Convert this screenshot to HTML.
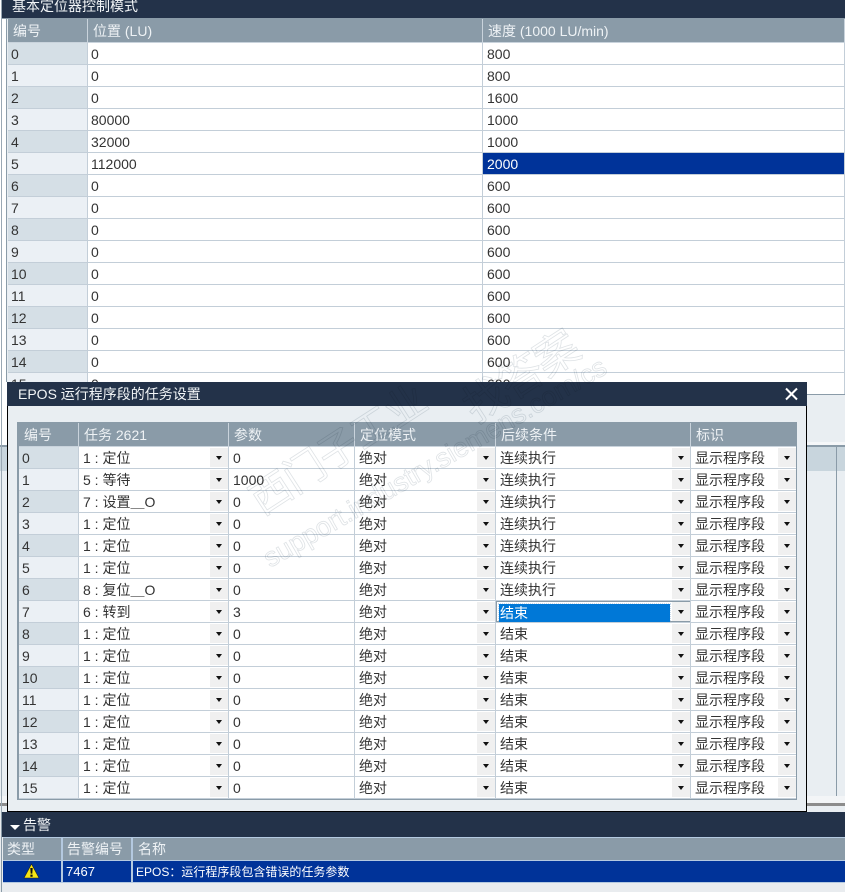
<!DOCTYPE html>
<html lang="zh"><head><meta charset="utf-8"><title>EPOS</title>
<style>
html,body{margin:0;padding:0}
body{position:relative;width:845px;height:892px;overflow:hidden;background:#e9eef2;font:14px/20px "Liberation Sans","WenQuanYi Zen Hei",sans-serif;color:#333}
.a{position:absolute}
table{border-collapse:separate;border-spacing:0;table-layout:fixed;background:#fff}
td{height:20px;padding:1px 0 0 4px;border-right:1px solid #c3ced8;border-bottom:1px solid #c3ced8;white-space:nowrap;overflow:hidden;position:relative;box-sizing:content-box}
tr.h td{background:#8a9ba8;color:#eef2f5;border-color:#c9d3dc;padding-left:5px}
td:first-child{padding-left:3px;background:#ebf0f5}
tr:nth-child(even) td:first-child{background:#d5dfe6}
tr.h td:first-child{background:#8a9ba8;padding-left:5px}
tr.h td{height:22px}
td.sel{background:#003399;color:#fff}
td.d i{position:absolute;right:0;top:1px;width:18px;height:19px;background:#f0f0f0}
td.d i:after{content:"";position:absolute;left:6px;top:8px;border:3px solid transparent;border-top:4px solid #111;border-bottom:0}
td.f b{position:absolute;left:3px;top:3px;width:171px;height:18px;background:#0078d7;color:#fff;font-weight:400;line-height:18px;padding-left:1px;box-sizing:border-box;outline:1px dotted #cde}
td.f{box-shadow:inset 0 0 0 1px #8a9ba8}
</style></head><body>
<div class="a" style="left:0;top:0;width:7px;height:445px;background:#fff"></div>
<div class="a" style="left:0;top:445px;width:7px;height:2px;background:#8a9ba8"></div>
<div class="a" style="left:0;top:447px;width:7px;height:24px;background:#c8d5dd"></div>
<div class="a" style="left:0;top:471px;width:7px;height:325px;background:#e9eef2"></div>
<div class="a" style="left:0;top:796px;width:7px;height:7px;background:#f3f5f7"></div>
<div class="a" style="left:0;top:803px;width:7px;height:3px;background:#8c8c8c"></div>
<div class="a" style="left:1px;top:0;width:1px;height:812px;background:#9aa8b4"></div>
<div class="a" style="left:6px;top:19px;width:1px;height:363px;background:#8a9ba8"></div>
<div class="a" style="left:2px;top:0;width:843px;height:18px;background:#233249;color:#f2f5f7;line-height:13px;padding-left:10px;box-sizing:border-box">基本定位器控制模式</div>
<div class="a" style="left:2px;top:18px;width:843px;height:1px;background:#8a9ba8"></div>

<table id="t" class="a" style="left:8px;top:19px;width:837px">
<colgroup><col style="width:80px"><col style="width:395px"><col style="width:362px"></colgroup>
<tr class="h"><td>编号</td><td>位置 (LU)</td><td>速度 (1000 LU/min)</td></tr>
<tr><td>0</td><td style="padding-left:3px">0</td><td>800</td></tr>
<tr><td>1</td><td style="padding-left:3px">0</td><td>800</td></tr>
<tr><td>2</td><td style="padding-left:3px">0</td><td>1600</td></tr>
<tr><td>3</td><td style="padding-left:3px">80000</td><td>1000</td></tr>
<tr><td>4</td><td style="padding-left:3px">32000</td><td>1000</td></tr>
<tr><td>5</td><td style="padding-left:3px">112000</td><td class="sel">2000</td></tr>
<tr><td>6</td><td style="padding-left:3px">0</td><td>600</td></tr>
<tr><td>7</td><td style="padding-left:3px">0</td><td>600</td></tr>
<tr><td>8</td><td style="padding-left:3px">0</td><td>600</td></tr>
<tr><td>9</td><td style="padding-left:3px">0</td><td>600</td></tr>
<tr><td>10</td><td style="padding-left:3px">0</td><td>600</td></tr>
<tr><td>11</td><td style="padding-left:3px">0</td><td>600</td></tr>
<tr><td>12</td><td style="padding-left:3px">0</td><td>600</td></tr>
<tr><td>13</td><td style="padding-left:3px">0</td><td>600</td></tr>
<tr><td>14</td><td style="padding-left:3px">0</td><td>600</td></tr>
<tr><td>15</td><td style="padding-left:3px">0</td><td>600</td></tr>
</table>

<!-- right-hand background panel -->
<div class="a" style="left:807px;top:394px;width:38px;height:1px;background:#8a9ba8"></div>
<div class="a" style="left:807px;top:395px;width:38px;height:417px;background:#e9eef2"></div>
<div class="a" style="left:807px;top:442px;width:38px;height:3px;background:#f5f7f9"></div>
<div class="a" style="left:807px;top:445px;width:38px;height:2px;background:#8a9ba8"></div>
<div class="a" style="left:807px;top:447px;width:38px;height:24px;background:#c8d5dd"></div>
<div class="a" style="left:836px;top:445px;width:1px;height:351px;background:#8a9ba8"></div>
<div class="a" style="left:807px;top:796px;width:38px;height:7px;background:#f3f5f7"></div>
<div class="a" style="left:807px;top:803px;width:38px;height:3px;background:#8c8c8c"></div>

<!-- dialog -->
<div class="a" style="left:7px;top:382px;width:800px;height:430px;background:#e9eef2;border:solid #000;border-width:0 1px 1px 1px;box-sizing:border-box"></div>
<div class="a" style="left:7px;top:382px;width:800px;height:24px;background:#233249;color:#f2f5f7;line-height:24px;padding-left:11px;box-sizing:border-box">EPOS 运行程序段的任务设置</div>
<svg class="a" style="left:784px;top:387px" width="15" height="14" viewBox="0 0 15 14"><path d="M2 1.5L13 12.5M13 1.5L2 12.5" stroke="#fff" stroke-width="2" fill="none"/></svg>
<div class="a" style="left:17px;top:422px;width:780px;height:378px;background:#fff;border:1px solid #8a9ba8;border-width:1px 1px 2px 2px;box-sizing:border-box"></div>

<table id="d" class="a" style="left:19px;top:423px;width:777px">
<colgroup><col style="width:60px"><col style="width:150px"><col style="width:126px"><col style="width:141px"><col style="width:195px"><col style="width:105px"></colgroup>
<tr class="h"><td>编号</td><td>任务 2621</td><td>参数</td><td>定位模式</td><td>后续条件</td><td style="border-right:0">标识</td></tr>
<tr><td>0</td><td class="d">1 : 定位<i></i></td><td>0</td><td class="d">绝对<i></i></td><td class="d">连续执行<i></i></td><td class="d" style="border-right:0">显示程序段<i></i></td></tr>
<tr><td>1</td><td class="d">5 : 等待<i></i></td><td>1000</td><td class="d">绝对<i></i></td><td class="d">连续执行<i></i></td><td class="d" style="border-right:0">显示程序段<i></i></td></tr>
<tr><td>2</td><td class="d">7 : 设置＿O<i></i></td><td>0</td><td class="d">绝对<i></i></td><td class="d">连续执行<i></i></td><td class="d" style="border-right:0">显示程序段<i></i></td></tr>
<tr><td>3</td><td class="d">1 : 定位<i></i></td><td>0</td><td class="d">绝对<i></i></td><td class="d">连续执行<i></i></td><td class="d" style="border-right:0">显示程序段<i></i></td></tr>
<tr><td>4</td><td class="d">1 : 定位<i></i></td><td>0</td><td class="d">绝对<i></i></td><td class="d">连续执行<i></i></td><td class="d" style="border-right:0">显示程序段<i></i></td></tr>
<tr><td>5</td><td class="d">1 : 定位<i></i></td><td>0</td><td class="d">绝对<i></i></td><td class="d">连续执行<i></i></td><td class="d" style="border-right:0">显示程序段<i></i></td></tr>
<tr><td>6</td><td class="d">8 : 复位＿O<i></i></td><td>0</td><td class="d">绝对<i></i></td><td class="d">连续执行<i></i></td><td class="d" style="border-right:0">显示程序段<i></i></td></tr>
<tr><td>7</td><td class="d">6 : 转到<i></i></td><td>3</td><td class="d">绝对<i></i></td><td class="d f"><b>结束</b><i></i></td><td class="d" style="border-right:0">显示程序段<i></i></td></tr>
<tr><td>8</td><td class="d">1 : 定位<i></i></td><td>0</td><td class="d">绝对<i></i></td><td class="d">结束<i></i></td><td class="d" style="border-right:0">显示程序段<i></i></td></tr>
<tr><td>9</td><td class="d">1 : 定位<i></i></td><td>0</td><td class="d">绝对<i></i></td><td class="d">结束<i></i></td><td class="d" style="border-right:0">显示程序段<i></i></td></tr>
<tr><td>10</td><td class="d">1 : 定位<i></i></td><td>0</td><td class="d">绝对<i></i></td><td class="d">结束<i></i></td><td class="d" style="border-right:0">显示程序段<i></i></td></tr>
<tr><td>11</td><td class="d">1 : 定位<i></i></td><td>0</td><td class="d">绝对<i></i></td><td class="d">结束<i></i></td><td class="d" style="border-right:0">显示程序段<i></i></td></tr>
<tr><td>12</td><td class="d">1 : 定位<i></i></td><td>0</td><td class="d">绝对<i></i></td><td class="d">结束<i></i></td><td class="d" style="border-right:0">显示程序段<i></i></td></tr>
<tr><td>13</td><td class="d">1 : 定位<i></i></td><td>0</td><td class="d">绝对<i></i></td><td class="d">结束<i></i></td><td class="d" style="border-right:0">显示程序段<i></i></td></tr>
<tr><td>14</td><td class="d">1 : 定位<i></i></td><td>0</td><td class="d">绝对<i></i></td><td class="d">结束<i></i></td><td class="d" style="border-right:0">显示程序段<i></i></td></tr>
<tr><td>15</td><td class="d">1 : 定位<i></i></td><td>0</td><td class="d">绝对<i></i></td><td class="d">结束<i></i></td><td class="d" style="border-right:0">显示程序段<i></i></td></tr>
</table>

<!-- watermark -->
<svg class="a" style="left:0;top:0;mix-blend-mode:multiply" width="845" height="892">
<g fill="none" stroke="#dfe3e6" stroke-width=".8" font-family="'Liberation Sans','WenQuanYi Zen Hei',sans-serif">
<text transform="translate(262,516) rotate(-33)" font-size="41" letter-spacing="-1">西门子工业</text>
<text transform="translate(476,424) rotate(-33)" font-size="44" letter-spacing="-2">找答案</text>
<text transform="translate(270,568) rotate(-30)" font-size="27">support.industry.siemens.com/cs</text>
</g></svg>

<!-- alarms -->
<div class="a" style="left:0;top:812px;width:845px;height:80px;background:#e9ecef"></div>
<div class="a" style="left:1px;top:812px;width:1px;height:80px;background:#8a9ba8"></div>
<div class="a" style="left:2px;top:812px;width:843px;height:25px;background:#233249;color:#f2f5f7;line-height:26px;padding-left:21px;box-sizing:border-box">告警</div>
<div class="a" style="left:10px;top:825px;border:5px solid transparent;border-top:5px solid #fff;border-bottom:0"></div>
<div class="a" style="left:3px;top:837px;width:842px;height:46px;background:#b4c9e0"></div>
<div class="a" style="left:3px;top:838px;width:58px;height:22px;background:#8a9ba8;color:#eef2f5;line-height:23px;padding-left:4px;box-sizing:border-box">类型</div>
<div class="a" style="left:63px;top:838px;width:68px;height:22px;background:#8a9ba8;color:#eef2f5;line-height:23px;padding-left:4px;box-sizing:border-box">告警编号</div>
<div class="a" style="left:133px;top:838px;width:712px;height:22px;background:#8a9ba8;color:#eef2f5;line-height:23px;padding-left:5px;box-sizing:border-box">名称</div>
<div class="a" style="left:3px;top:861px;width:58px;height:21px;background:#003399"></div>
<svg class="a" style="left:23px;top:863px" width="17" height="16" viewBox="0 0 17 16"><path d="M8.5 1L16 15H1Z" fill="#f7e514" stroke="#222" stroke-width=".6"/><path d="M7.3 5h2.4l-.4 5.6H7.7zM7.4 11.6h2.2v2.2H7.4z" fill="#111"/></svg>
<div class="a" style="left:63px;top:861px;width:68px;height:21px;background:#003399;color:#fff;font-size:13px;line-height:22px;padding-left:3px;box-sizing:border-box">7467</div>
<div class="a" style="left:133px;top:861px;width:712px;height:21px;background:#003399;color:#fff;font-size:12px;line-height:23px;padding-left:3px;box-sizing:border-box">EPOS：运行程序段包含错误的任务参数</div>
</body></html>
